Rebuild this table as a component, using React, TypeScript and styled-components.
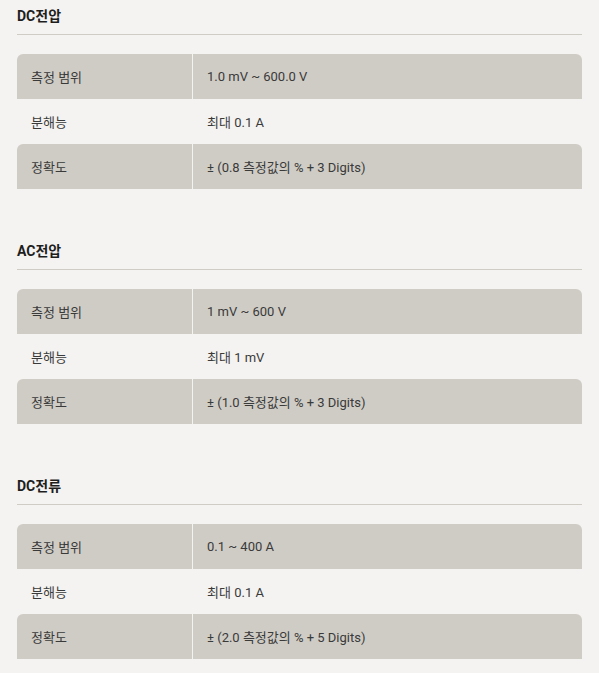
import React from "react";
import styled, { createGlobalStyle } from "styled-components";

const Global = createGlobalStyle`
  html, body { margin: 0; padding: 0; background: #f4f3f1; }
  body { font-family: Roboto, "Noto Sans CJK KR", sans-serif; }
`;

const Page = styled.div`
  padding: 0 17px 16px 17px;
`;

const Section = styled.section`
  margin-top: ${(p: { $first?: boolean }) => (p.$first ? "6px" : "52px")};
`;

const Heading = styled.h3`
  margin: 0;
  font-size: 14px;
  line-height: 20px;
  font-weight: 700;
  color: #1e1e1e;
  padding-bottom: 8px;
  border-bottom: 1px solid #cfccc6;
`;

const Table = styled.table`
  width: 100%;
  margin-top: 19px;
  border-collapse: separate;
  border-spacing: 0;
  table-layout: fixed;
`;

const Row = styled.tr<{ $shaded?: boolean }>`
  background: transparent;
  td {
    background: ${(p) => (p.$shaded ? "#cfccc5" : "transparent")};
  }
  td:first-child {
    border-top-left-radius: 6px;
  }
  td:last-child {
    border-top-right-radius: 6px;
  }
`;

const Label = styled.td`
  width: 161px;
  height: 45px;
  padding: 0 0 0 14px;
  font-size: 13px;
  color: #3a3a3a;
  vertical-align: middle;
`;

const Value = styled.td`
  height: 45px;
  padding: 0 0 0 14px;
  border-left: 1px solid #f4f3f1;
  font-size: 13px;
  color: #3a3a3a;
  vertical-align: middle;
`;

type Spec = { title: string; range: string; res: string; acc: string };

const specs: Spec[] = [
  { title: "DC전압", range: "1.0 mV ~ 600.0 V", res: "최대 0.1 A", acc: "± (0.8 측정값의 % + 3 Digits)" },
  { title: "AC전압", range: "1 mV ~ 600 V", res: "최대 1 mV", acc: "± (1.0 측정값의 % + 3 Digits)" },
  { title: "DC전류", range: "0.1 ~ 400 A", res: "최대 0.1 A", acc: "± (2.0 측정값의 % + 5 Digits)" },
];

export default function App() {
  return (
    <>
      <Global />
      <Page>
        {specs.map((s, i) => (
          <Section key={s.title} $first={i === 0}>
            <Heading>{s.title}</Heading>
            <Table>
              <tbody>
                <Row $shaded>
                  <Label>측정 범위</Label>
                  <Value>{s.range}</Value>
                </Row>
                <Row>
                  <Label>분해능</Label>
                  <Value>{s.res}</Value>
                </Row>
                <Row $shaded>
                  <Label>정확도</Label>
                  <Value>{s.acc}</Value>
                </Row>
              </tbody>
            </Table>
          </Section>
        ))}
      </Page>
    </>
  );
}
